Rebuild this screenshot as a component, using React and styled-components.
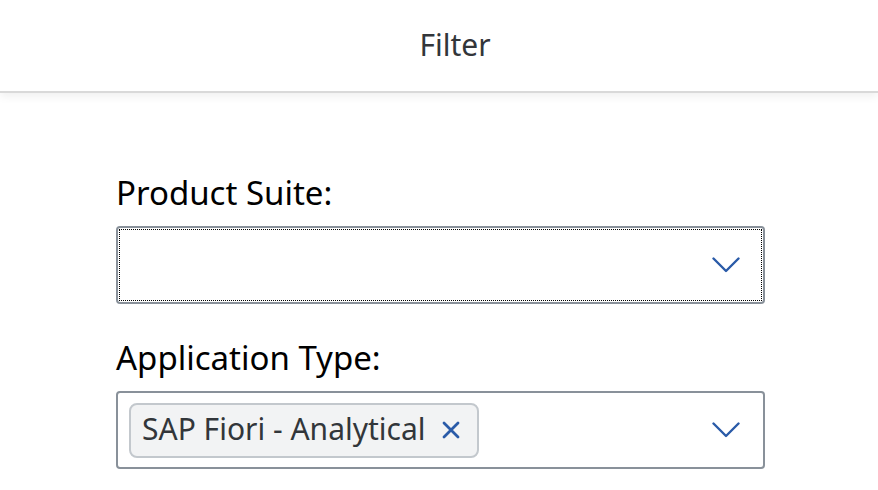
import styled, { createGlobalStyle } from "styled-components";

const GlobalStyle = createGlobalStyle`
  html, body {
    margin: 0;
    padding: 0;
    background: #ffffff;
    font-family: "Noto Sans", "Liberation Sans", Arial, sans-serif;
  }
`;

function ChevronDown() {
  return (
    <svg width="28" height="16" viewBox="0 0 28 16" fill="none">
      <path
        d="M1.5 1.5 L14 14 L26.5 1.5"
        stroke="#2a5ba8"
        strokeWidth="2.4"
        strokeLinecap="round"
        strokeLinejoin="round"
      />
    </svg>
  );
}

function CloseIcon() {
  return (
    <svg width="18" height="18" viewBox="0 0 18 18" fill="none">
      <path
        d="M2 2 L16 16 M16 2 L2 16"
        stroke="#2a5ba8"
        strokeWidth="2.8"
        strokeLinecap="round"
      />
    </svg>
  );
}

export default function App() {
  return (
    <>
      <GlobalStyle />
      <Page>
        <Header>
          <Title>Filter</Title>
        </Header>
        <Form>
          <Field>
            <Label>Product Suite:</Label>
            <Select focused>
              <Values />
              <Arrow>
                <ChevronDown />
              </Arrow>
            </Select>
          </Field>
          <Field>
            <Label>Application Type:</Label>
            <Select>
              <Values>
                <Token>
                  <TokenText>SAP Fiori - Analytical</TokenText>
                  <TokenRemove>
                    <CloseIcon />
                  </TokenRemove>
                </Token>
              </Values>
              <Arrow>
                <ChevronDown />
              </Arrow>
            </Select>
          </Field>
        </Form>
      </Page>
    </>
  );
}

const Page = styled.div`
  width: 878px;
  height: 490px;
  overflow: hidden;
  background: #ffffff;
`;

const Header = styled.header`
  height: 91px;
  display: flex;
  align-items: center;
  justify-content: center;
  padding-left: 32px;
  border-bottom: 2px solid #d9d9d9;
  box-shadow: 0 4px 8px rgba(0, 0, 0, 0.06);
`;

const Title = styled.h1`
  margin: 0;
  font-size: 30px;
  font-weight: 400;
  color: #32363a;
  line-height: 1;
  padding-bottom: 2px;
`;

const Form = styled.div`
  display: flex;
  flex-direction: column;
  gap: 35px;
  padding: 81px 113px 0 116px;
`;

const Field = styled.div`
  display: flex;
  flex-direction: column;
  gap: 14px;
`;

const Label = styled.label`
  font-size: 33px;
  line-height: 38px;
  color: #000000;
`;

const Select = styled.div`
  position: relative;
  height: 78px;
  box-sizing: border-box;
  border: 2px solid #89919a;
  border-radius: 4px;
  background: #ffffff;
  display: flex;
  align-items: center;
  padding: 0 23px 0 11px;

  &::after {
    content: "";
    display: ${(p) => (p.focused ? "block" : "none")};
    position: absolute;
    inset: 1px;
    border: 1px dotted #000000;
    pointer-events: none;
  }
`;

const Values = styled.div`
  flex: 1;
  display: flex;
  align-items: center;
  gap: 8px;
`;

const Arrow = styled.span`
  display: flex;
  align-items: center;
`;

const Token = styled.div`
  display: flex;
  align-items: center;
  gap: 16px;
  height: 55px;
  box-sizing: border-box;
  padding: 0 17px 0 11px;
  background: #f2f3f4;
  border: 2px solid #c3c8cd;
  border-radius: 8px;
`;

const TokenText = styled.span`
  font-size: 30px;
  color: #32363a;
  line-height: 1;
  padding-bottom: 3px;
`;

const TokenRemove = styled.span`
  display: flex;
  align-items: center;
`;
